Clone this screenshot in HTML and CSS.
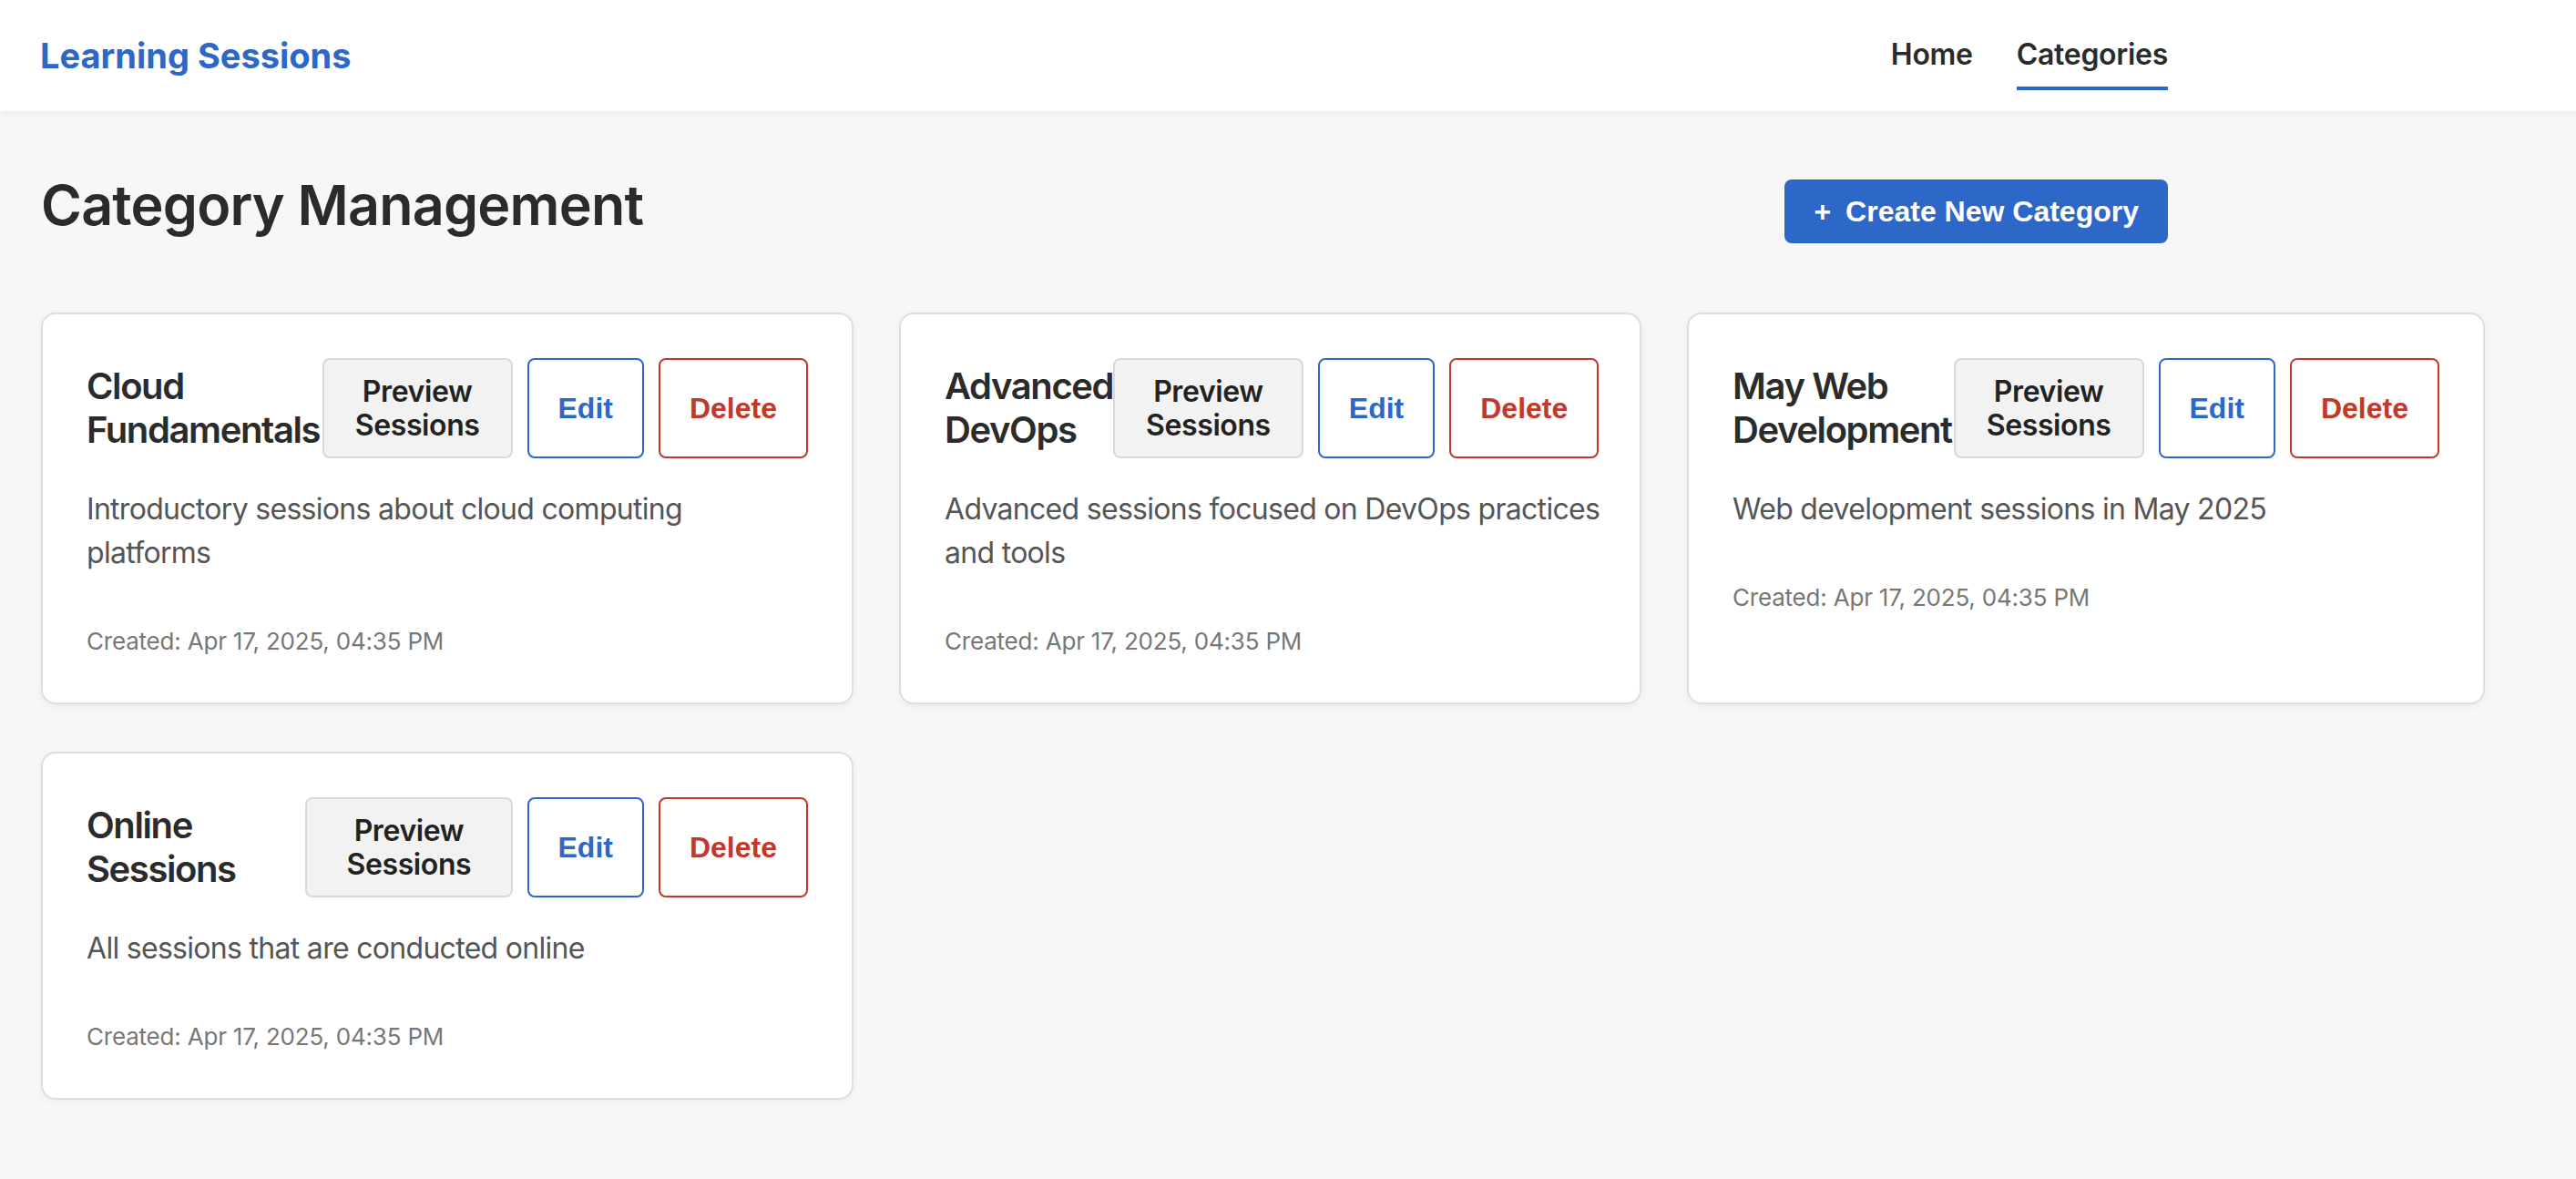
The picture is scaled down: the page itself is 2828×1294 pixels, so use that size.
FILE: index.html
```html
<!DOCTYPE html>
<html lang="en">
<head>
<meta charset="utf-8">
<title>Learning Sessions - Categories</title>
<link rel="stylesheet" href="styles.css">
</head>
<body>
<header class="topbar">
  <div class="topbar-inner">
    <a class="logo" href="#">Learning Sessions</a>
    <nav class="nav">
      <a class="nav-link" href="#">Home</a>
      <a class="nav-link active" href="#">Categories</a>
    </nav>
  </div>
</header>
<main class="main">
  <div class="page-head">
    <h1 class="page-title">Category Management</h1>
    <button class="btn-create"><span class="plus">+</span>Create New Category</button>
  </div>
  <div class="grid">
    <div class="card">
      <div class="card-head">
        <h3 class="card-title">Cloud Fundamentals</h3>
        <div class="actions">
          <button class="btn btn-preview">Preview Sessions</button>
          <button class="btn btn-edit">Edit</button>
          <button class="btn btn-delete">Delete</button>
        </div>
      </div>
      <p class="desc">Introductory sessions about cloud computing platforms</p>
      <p class="created">Created: Apr 17, 2025, 04:35 PM</p>
    </div>
    <div class="card">
      <div class="card-head">
        <h3 class="card-title">Advanced DevOps</h3>
        <div class="actions">
          <button class="btn btn-preview">Preview Sessions</button>
          <button class="btn btn-edit">Edit</button>
          <button class="btn btn-delete">Delete</button>
        </div>
      </div>
      <p class="desc">Advanced sessions focused on DevOps practices and tools</p>
      <p class="created">Created: Apr 17, 2025, 04:35 PM</p>
    </div>
    <div class="card">
      <div class="card-head">
        <h3 class="card-title">May Web Development</h3>
        <div class="actions">
          <button class="btn btn-preview">Preview Sessions</button>
          <button class="btn btn-edit">Edit</button>
          <button class="btn btn-delete">Delete</button>
        </div>
      </div>
      <p class="desc">Web development sessions in May 2025</p>
      <p class="created">Created: Apr 17, 2025, 04:35 PM</p>
    </div>
    <div class="card">
      <div class="card-head">
        <h3 class="card-title">Online Sessions</h3>
        <div class="actions">
          <button class="btn btn-preview">Preview Sessions</button>
          <button class="btn btn-edit">Edit</button>
          <button class="btn btn-delete">Delete</button>
        </div>
      </div>
      <p class="desc">All sessions that are conducted online</p>
      <p class="created">Created: Apr 17, 2025, 04:35 PM</p>
    </div>
  </div>
</main>
</body>
</html>
```

FILE: styles.css
```css
* { box-sizing: border-box; }

html, body {
  margin: 0;
  padding: 0;
}

body {
  background: #f7f7f7;
  font-family: Inter, "Noto Sans", "DejaVu Sans", sans-serif;
  color: #2b2b2b;
  min-height: 1294px;
}

.topbar {
  background: #ffffff;
  height: 122px;
  box-shadow: 0 2px 8px rgba(0, 0, 0, 0.07);
  position: relative;
}

.topbar-inner {
  max-width: 2424px;
  height: 100%;
  padding: 0 44px;
  display: flex;
  align-items: center;
  justify-content: space-between;
}

.logo {
  color: #2d68c8;
  font-weight: 700;
  font-size: 38px;
  text-decoration: none;
  letter-spacing: 0;
}

.nav {
  display: flex;
  gap: 48px;
}

.nav-link {
  color: #2b2b2b;
  text-decoration: none;
  font-size: 32px;
  font-weight: 600;
  padding: 17px 0 16px;
  border-bottom: 4px solid transparent;
  letter-spacing: -0.3px;
}

.nav-link.active {
  border-bottom-color: #2d68c8;
}

.main {
  padding: 75px 44px 60px 45px;
}

.page-head {
  max-width: 2335px;
  display: flex;
  align-items: center;
  justify-content: space-between;
}

.page-title {
  margin: 0 0 14px;
  font-size: 61px;
  line-height: 56px;
  font-weight: 600;
  color: #2b2b2b;
  letter-spacing: -0.8px;
}

.btn-create {
  height: 70px;
  padding: 0 32px;
  background: #2d68c8;
  color: #ffffff;
  border: none;
  border-radius: 8px;
  font-family: "Liberation Sans", Arial, sans-serif;
  font-weight: 700;
  font-size: 32px;
  display: flex;
  align-items: center;
}

.plus {
  margin-right: 16px;
}

.grid {
  margin-top: 76px;
  display: grid;
  grid-template-columns: 892px 815px 876px;
  column-gap: 50px;
  row-gap: 52px;
  align-items: stretch;
}

.card {
  background: #ffffff;
  border: 2px solid #dedede;
  border-radius: 16px;
  padding: 48px;
  box-shadow: 0 2px 8px rgba(0, 0, 0, 0.05);
}

.card-head {
  display: flex;
  align-items: center;
  justify-content: space-between;
}

.card-title {
  margin: 0;
  font-size: 40px;
  line-height: 48px;
  font-weight: 600;
  color: #2b2b2b;
  letter-spacing: -1.4px;
}

.actions {
  display: flex;
  gap: 16px;
  align-items: stretch;
}

.btn {
  border: 2px solid;
  border-radius: 8px;
  padding: 16px 32px;
  font-size: 32px;
  font-weight: 700;
  background: #ffffff;
  line-height: 37px;
}

.btn-preview {
  font-family: Inter, "Noto Sans", sans-serif;
  font-weight: 600;
  letter-spacing: -0.4px;
  background: #f2f2f2;
  border-color: #d9d9d9;
  color: #222222;
  padding: 16px 34px;
}

.btn-edit {
  font-family: "Liberation Sans", Arial, sans-serif;
  border-color: #2d68c8;
  color: #2d68c8;
}

.btn-delete {
  font-family: "Liberation Sans", Arial, sans-serif;
  border-color: #c0392b;
  color: #c0392b;
}

.desc {
  margin: 32px -40px 0 0;
  max-width: 770px;
  font-size: 32px;
  line-height: 48px;
  color: #555555;
  letter-spacing: -0.7px;
}

.created {
  margin: 54px 0 0;
  font-size: 26px;
  line-height: 38px;
  color: #777777;
  letter-spacing: -0.2px;
}
```
